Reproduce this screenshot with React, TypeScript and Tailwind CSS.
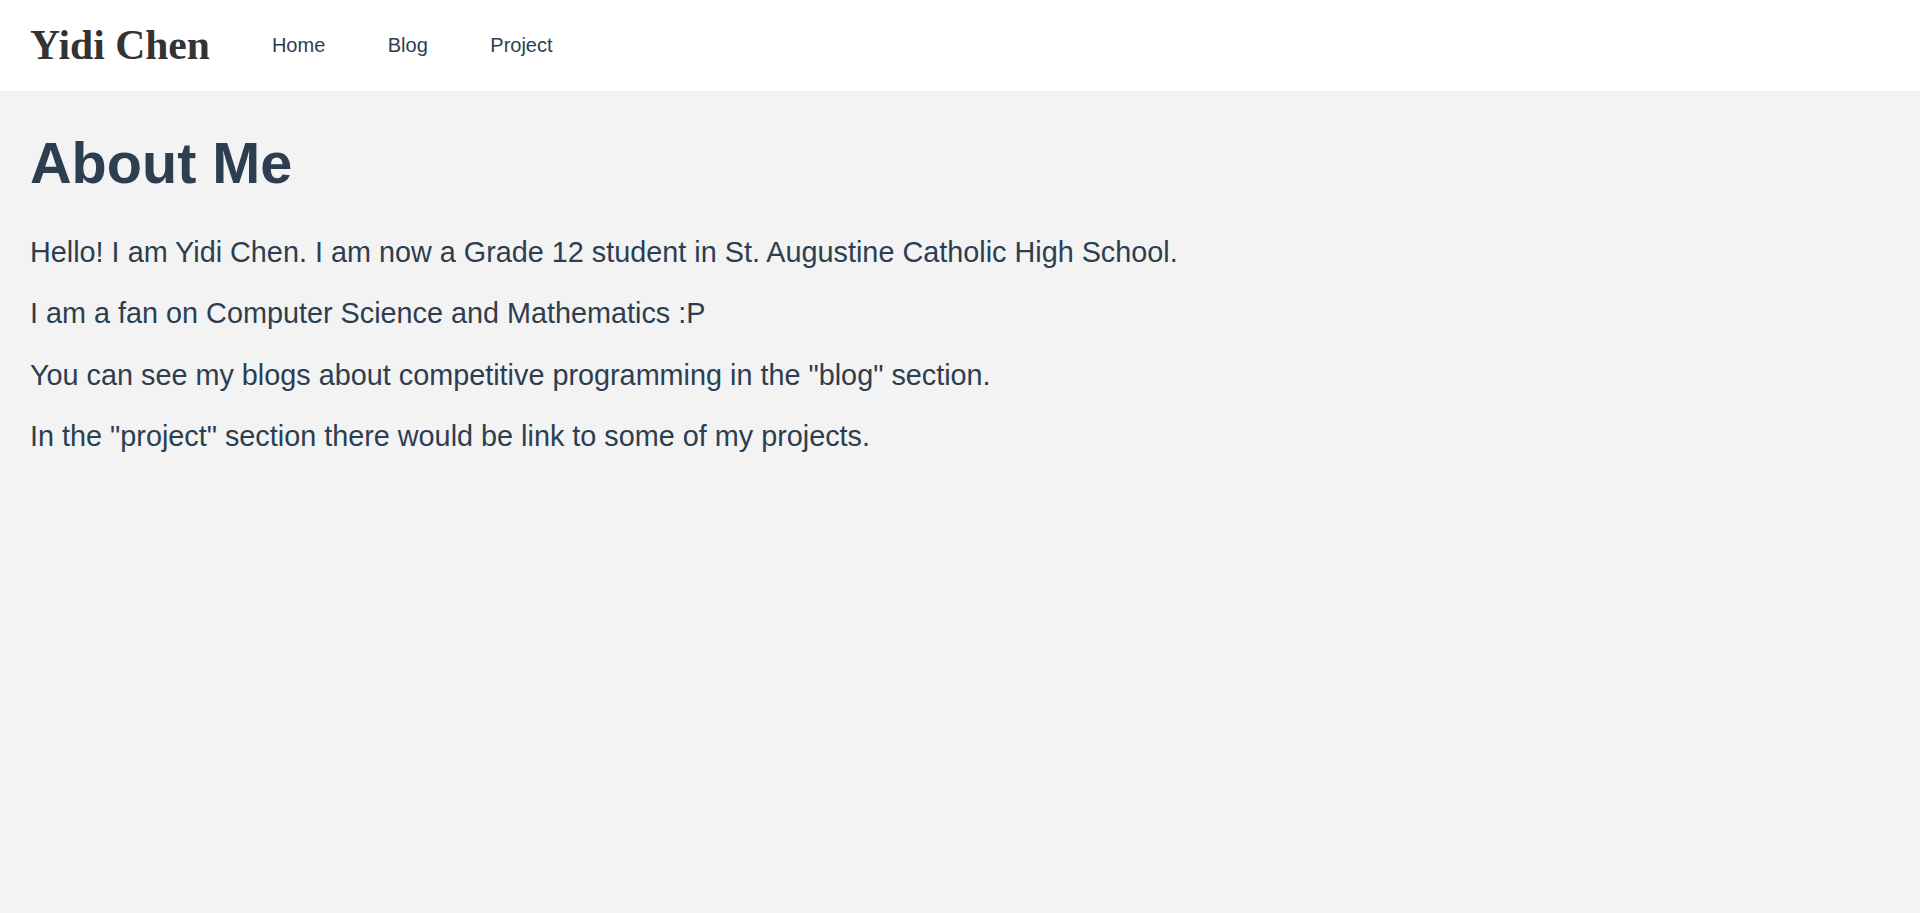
import React from "react";

export default function App() {
  const paras = [
    "Hello! I am Yidi Chen. I am now a Grade 12 student in St. Augustine Catholic High School.",
    "I am a fan on Computer Science and Mathematics :P",
    'You can see my blogs about competitive programming in the "blog" section.',
    'In the "project" section there would be link to some of my projects.',
  ];
  return (
    <div className="min-h-[913px] bg-[#f3f3f3] text-[#2c3e50]" style={{ fontFamily: '"Liberation Sans", Arial, sans-serif' }}>
      <header className="flex h-[91px] items-center bg-white pl-[30px]">
        <div
          className="text-[41.6px] font-bold leading-[1.15] text-[#333333]"
          style={{ fontFamily: '"Liberation Serif", "Times New Roman", serif' }}
        >
          Yidi Chen
        </div>
        <nav className="ml-[62px] flex gap-[62.5px] text-[20px] leading-[1.15] text-[#2c3e50]">
          <a href="#">Home</a>
          <a href="#">Blog</a>
          <a href="#">Project</a>
        </nav>
      </header>
      <main className="px-[30px] pt-[39px]">
        <h1 className="mb-[40px] text-[57.6px] font-bold leading-[66px]">About Me</h1>
        <div className="flex flex-col gap-[28.4px]">
          {paras.map((p, i) => (
            <p key={i} className="text-[28.8px] leading-[33px]">
              {p}
            </p>
          ))}
        </div>
      </main>
    </div>
  );
}
